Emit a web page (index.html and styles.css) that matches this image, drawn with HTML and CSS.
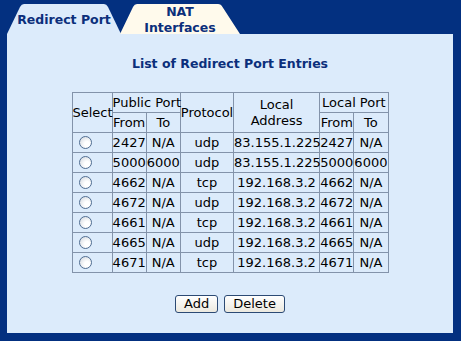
FILE: index.html
```html
<!DOCTYPE html>
<html lang="en">
<head>
    <meta charset="UTF-8">
    <title>Redirect Port</title>
    <link rel="stylesheet" href="styles.css">
</head>
<body>

<div class="tabs">
    <div class="tab tab-active">Redirect Port</div>
    <div class="tab tab-nat">NAT<br>Interfaces</div>
</div>

<div class="panel">
    <h2>List of Redirect Port Entries</h2>

    <form id="redirect-form">
        <table class="entries">
            <colgroup>
                <col class="c-sel">
                <col class="c-port">
                <col class="c-port">
                <col class="c-proto">
                <col class="c-addr">
                <col class="c-port">
                <col class="c-port">
            </colgroup>
            <thead>
                <tr>
                    <th rowspan="2">Select</th>
                    <th colspan="2">Public Port</th>
                    <th rowspan="2">Protocol</th>
                    <th rowspan="2">Local<br>Address</th>
                    <th colspan="2">Local Port</th>
                </tr>
                <tr>
                    <th>From</th>
                    <th>To</th>
                    <th>From</th>
                    <th>To</th>
                </tr>
            </thead>
            <tbody id="entries-body"></tbody>
        </table>

        <div class="actions">
            <button type="button">Add</button>
            <button type="button">Delete</button>
        </div>
    </form>
</div>

<script>
    // Entries as shown on the device page
    const entries = [
        ['2427', 'N/A', 'udp', '83.155.1.225', '2427', 'N/A'],
        ['5000', '6000', 'udp', '83.155.1.225', '5000', '6000'],
        ['4662', 'N/A', 'tcp', '192.168.3.2', '4662', 'N/A'],
        ['4672', 'N/A', 'udp', '192.168.3.2', '4672', 'N/A'],
        ['4661', 'N/A', 'tcp', '192.168.3.2', '4661', 'N/A'],
        ['4665', 'N/A', 'udp', '192.168.3.2', '4665', 'N/A'],
        ['4671', 'N/A', 'tcp', '192.168.3.2', '4671', 'N/A']
    ];

    const body = document.getElementById('entries-body');
    entries.forEach(function(row, i) {
        const tr = document.createElement('tr');
        let html = '<td class="sel"><input type="radio" name="entry" value="' + i + '"></td>';
        row.forEach(function(cell) {
            html += '<td>' + cell + '</td>';
        });
        tr.innerHTML = html;
        body.appendChild(tr);
    });
</script>

</body>
</html>
```

FILE: styles.css
```css
body {
    font-family: "DejaVu Sans", Verdana, sans-serif;
    background-color: #033080;
    margin: 0;
    padding: 4px 8px 8px 7px;
}

.tabs {
    display: flex;
    height: 30px;
}

.tab {
    display: flex;
    align-items: center;
    justify-content: center;
    text-align: center;
    height: 30px;
    font-size: 12.5px;
    font-weight: bold;
    line-height: 15px;
    color: #0b2f7b;
}

.tab-active {
    width: 114px;
    background-color: #dcebfb;
    clip-path: path('M0 30 L13 3 Q14.5 0 17 0 L97 0 Q99.5 0 101 3 L114 30 Z');
}

.tab-nat {
    width: 120px;
    margin-left: -1px;
    padding-top: 2px;
    line-height: 16px;
    box-sizing: border-box;
    background-color: #fffaec;
    clip-path: path('M0 30 L13 3 Q14.5 0 17 0 L98 0 Q101 0 102.5 3 L120 30 Z');
}

.panel {
    height: 299px;
    background-color: #dcebfb;
    padding-top: 22px;
    box-sizing: border-box;
}

.panel h2 {
    margin: 0 0 21px;
    font-size: 12.5px;
    line-height: 15px;
    text-align: center;
    color: #0b2f7b;
}

.entries {
    margin: 0 auto;
    border-collapse: collapse;
    table-layout: fixed;
    width: 317px;
    font-size: 13px;
    color: #000;
}

.c-sel { width: 40px; }
.c-port { width: 34px; }
.c-proto { width: 53px; }
.c-addr { width: 86px; }

.entries th,
.entries td {
    border: 1px solid #8393aa;
    padding: 0;
    height: 19px;
    font-weight: normal;
    text-align: center;
    white-space: nowrap;
    line-height: 16px;
}

.entries td.sel {
    text-align: left;
    padding-left: 6px;
}

.entries input[type="radio"] {
    appearance: none;
    display: block;
    width: 13px;
    height: 13px;
    margin: 0;
    border: 1px solid #4f6d92;
    border-radius: 50%;
    background: radial-gradient(circle at 65% 65%, #ffffff 25%, #cfd5dd 100%);
    box-sizing: border-box;
}

.actions {
    display: flex;
    justify-content: center;
    gap: 6px;
    margin-top: 22px;
}

.actions button {
    font-family: "DejaVu Sans", Verdana, sans-serif;
    font-size: 13px;
    height: 18px;
    padding: 0 8px;
    line-height: 14px;
    border: 1px solid #2c4a74;
    border-radius: 3px;
    background: linear-gradient(#ffffff, #ece9df);
    color: #000;
}
```
